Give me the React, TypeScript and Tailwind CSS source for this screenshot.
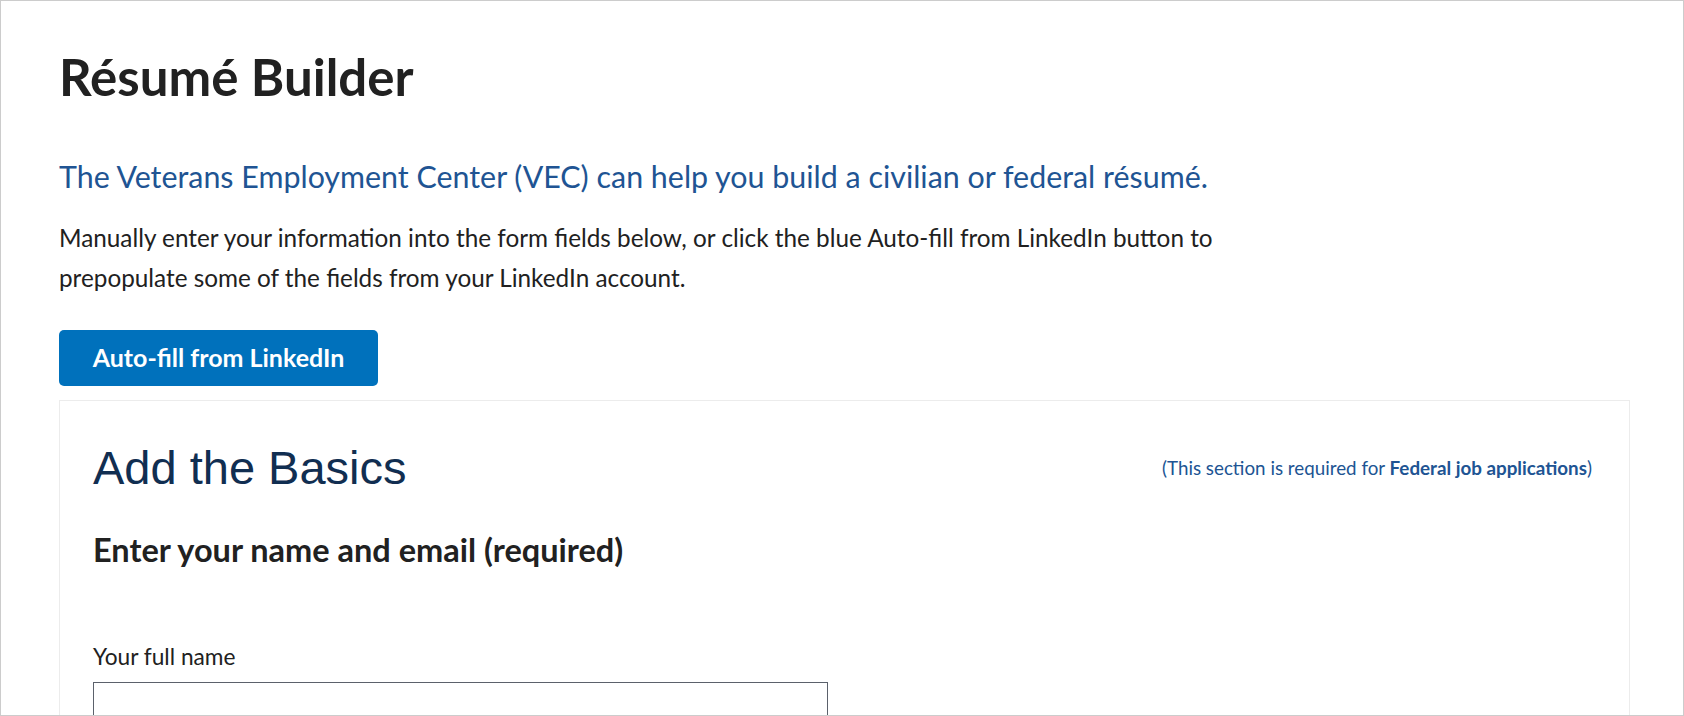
import React from "react";

const sans = "font-['Lato','Open_Sans',sans-serif]";

function BasicsCard() {
    return (
        <div className="mt-[14px] w-[1571px] border border-[#ececec] pl-[33px] pr-[37px] pt-[39px]">
            <div className="flex items-center justify-between">
                <h2 className="font-['Liberation_Sans',Arial,sans-serif] text-[47px] leading-[56px] font-normal text-[#112e51]">
                    Add the Basics
                </h2>
                <p className={`${sans} text-[18.8px] text-[#205493]`}>
                    (This section is required for <span className="font-bold">Federal job applications</span>)
                </p>
            </div>
            <h3 className={`${sans} mt-[36px] text-[32.5px] leading-[36px] font-bold text-[#212121]`}>
                Enter your name and email (required)
            </h3>
            <label className={`${sans} mt-[74px] block text-[22.7px] leading-[30px] text-[#212121]`} htmlFor="fullname">
                Your full name
            </label>
            <input
                id="fullname"
                type="text"
                className="mt-[10px] block h-[44px] w-[735px] border border-[#5b616b] bg-white"
            />
        </div>
    )
}

export default function App() {
    return (
        <div className="h-[716px] w-[1684px] overflow-hidden border border-[#cccccc] bg-white">
            <div className={`${sans} pl-[58px] pt-[48px] text-[#212121]`}>
                <h1 className="text-[51px] leading-[56px] font-bold">Résumé Builder</h1>
                <p className="mt-[51px] text-[30.4px] leading-[40px] text-[#205493]">
                    The Veterans Employment Center (VEC) can help you build a civilian or federal résumé.
                </p>
                <p className="mt-[22px] w-[1230px] text-[24.3px] leading-[40px]">
                    Manually enter your information into the form fields below, or click the blue Auto-fill from LinkedIn button to
                    <br />
                    prepopulate some of the fields from your LinkedIn account.
                </p>
                <button
                    type="button"
                    className="mt-[32px] h-[56px] w-[319px] rounded-[5px] bg-[#0071bc] text-[25px] font-bold text-white"
                >
                    Auto-fill from LinkedIn
                </button>
                <BasicsCard />
            </div>
        </div>
    )
}
